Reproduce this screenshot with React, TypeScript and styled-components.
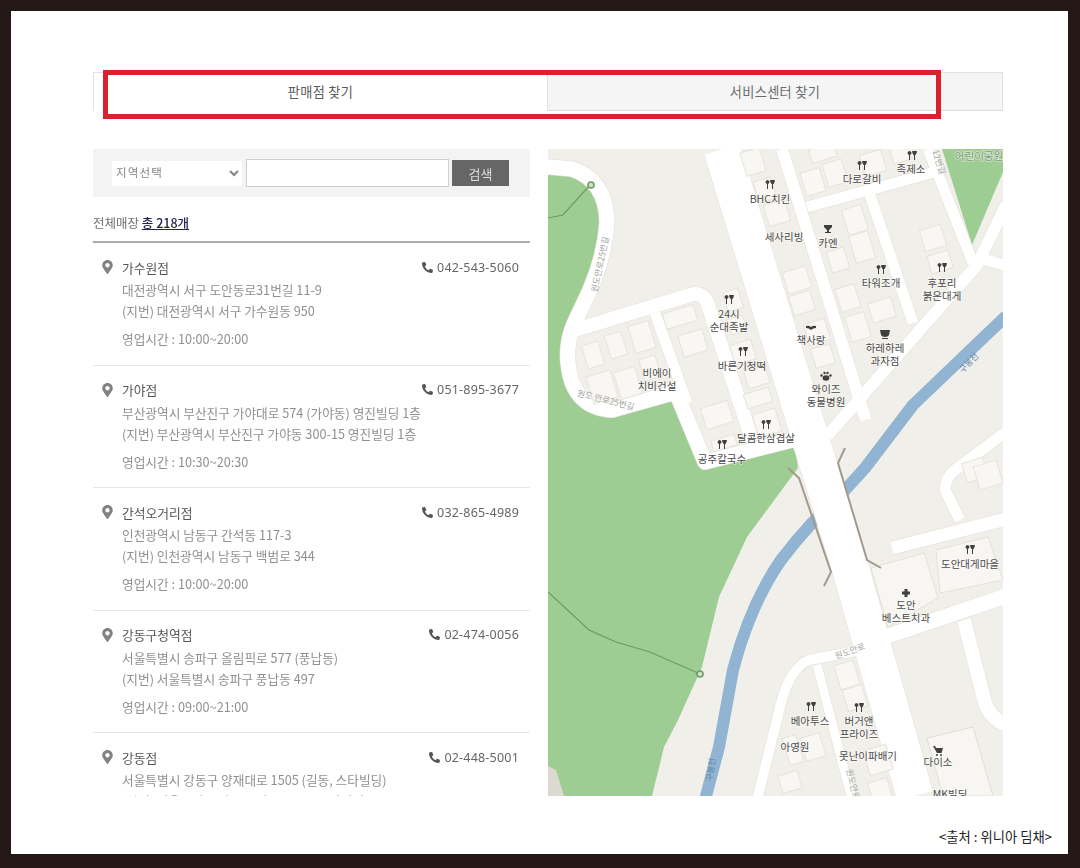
import React from "react";
import styled, { createGlobalStyle } from "styled-components";
import { FaMapMarkerAlt, FaPhoneAlt } from "react-icons/fa";

const KR = `"Noto Sans CJK KR", "Noto Sans", sans-serif`;

const GlobalStyle = createGlobalStyle`
  html, body {
    margin: 0;
    padding: 0;
    background: #231815;
    font-family: ${KR};
  }
`;

const Frame = styled.div`
  box-sizing: border-box;
  width: 1080px;
  height: 868px;
  padding: 11px 12px 14px 11px;
  background: #231815;
`;

const Page = styled.div`
  position: relative;
  height: 843px;
  padding: 61px 16px 0 82px;
  box-sizing: border-box;
  background: #fff;
`;

const Blurred = styled.div`
  width: 910px;
  filter: blur(0.45px);
`;

const Tabs = styled.div`
  display: flex;
  height: 39px;
  margin-bottom: 38px;
`;

const Tab = styled.div<{ $active?: boolean }>`
  box-sizing: border-box;
  display: flex;
  align-items: center;
  justify-content: center;
  width: ${(p) => (p.$active ? "454px" : "456px")};
  font-size: 13.2px;
  letter-spacing: 0.3px;
  color: ${(p) => (p.$active ? "#5c5c5c" : "#6c6c6c")};
  background: ${(p) => (p.$active ? "#fff" : "#f5f5f5")};
  border: 1px solid #e2e2e2;
  border-right: ${(p) => (p.$active ? "none" : "1px solid #e2e2e2")};
  border-bottom-color: ${(p) => (p.$active ? "#fff" : "#dcdcdc")};
`;

const Highlight = styled.div`
  position: absolute;
  left: 92px;
  top: 59px;
  box-sizing: border-box;
  width: 838px;
  height: 49px;
  border: 5px solid #d8232f;
`;

const Content = styled.div`
  display: flex;
  gap: 18px;
  height: 647px;
`;

const Side = styled.div`
  display: flex;
  flex-direction: column;
  width: 437px;
  overflow: hidden;
`;

const SearchBar = styled.div`
  display: flex;
  align-items: center;
  box-sizing: border-box;
  flex: none;
  height: 48px;
  padding-left: 19px;
  background: #f3f3f3;
`;

const RegionSelect = styled.select`
  box-sizing: border-box;
  width: 130px;
  height: 25px;
  margin-right: 4px;
  padding: 0 0 2px;
  border: none;
  background: #fff;
  color: #858585;
  font-family: ${KR};
  font-size: 11.5px;
  letter-spacing: 1.2px;
`;

const KeywordInput = styled.input`
  box-sizing: border-box;
  width: 203px;
  height: 28px;
  margin-right: 3px;
  border: 1px solid #cfcfcf;
  background: #fff;
`;

const SearchButton = styled.button`
  width: 57px;
  height: 26px;
  padding: 0;
  border: none;
  background: #666;
  color: #ddd;
  font-family: ${KR};
  font-size: 13px;
`;

const Total = styled.div`
  flex: none;
  height: 46px;
  box-sizing: border-box;
  padding-top: 16px;
  font-size: 12.5px;
  line-height: 20px;
  color: #707070;
  border-bottom: 2px solid #ababab;
`;

const TotalCount = styled.a`
  color: #23234f;
  font-weight: 500;
  text-decoration: underline;
`;

const Store = styled.div`
  flex: none;
  box-sizing: border-box;
  height: 122.6px;
  padding: 14px 11px 0 9px;
  border-bottom: 1px solid #e6e6e6;
`;

const StoreHead = styled.div`
  display: flex;
  align-items: center;
  height: 20px;
  margin-bottom: 2px;
`;

const Pin = styled(FaMapMarkerAlt)`
  width: 11px;
  height: 14px;
  margin-right: 9px;
  color: #828282;
`;

const StoreName = styled.div`
  flex: 1;
  font-size: 12.8px;
  color: #555;
`;

const Phone = styled.div`
  display: flex;
  align-items: center;
  gap: 4px;
  font-family: "Noto Sans", sans-serif;
  font-size: 12.5px;
  letter-spacing: 0.2px;
  color: #666;
`;

const PhoneIcon = styled(FaPhoneAlt)`
  width: 11px;
  height: 11px;
  color: #555;
`;

const Line = styled.div<{ $gap?: boolean }>`
  margin-top: ${(p) => (p.$gap ? "7px" : "0")};
  padding-left: 20px;
  font-size: 12.7px;
  line-height: 21px;
  color: #909090;
  white-space: nowrap;
`;

const MapBox = styled.div`
  flex: none;
  width: 455px;
  height: 647px;
  overflow: hidden;
`;

const MapSvg = styled.svg`
  display: block;
  width: 455px;
  height: 647px;
`;

const Label = styled.text<{ $tone?: string }>`
  font-family: ${KR};
  font-size: 10.5px;
  text-anchor: middle;
  fill: ${(p) => p.$tone || "#4a4a4a"};
  paint-order: stroke;
  stroke: rgba(255, 255, 255, 0.55);
  stroke-width: 1.5px;
`;

const RoadLabel = styled.text<{ $tone?: string }>`
  font-family: ${KR};
  font-size: 8.5px;
  text-anchor: middle;
  fill: ${(p) => p.$tone || "#a3a3a0"};
`;

const Caption = styled.div`
  margin-top: 32px;
  font-size: 13.3px;
  line-height: 18px;
  text-align: right;
  color: #222;
`;

const stores = [
  {
    name: "가수원점",
    phone: "042-543-5060",
    road: "대전광역시 서구 도안동로31번길 11-9",
    lot: "(지번) 대전광역시 서구 가수원동 950",
    hours: "영업시간 : 10:00~20:00",
  },
  {
    name: "가야점",
    phone: "051-895-3677",
    road: "부산광역시 부산진구 가야대로 574 (가야동) 영진빌딩 1층",
    lot: "(지번) 부산광역시 부산진구 가야동 300-15 영진빌딩 1층",
    hours: "영업시간 : 10:30~20:30",
  },
  {
    name: "간석오거리점",
    phone: "032-865-4989",
    road: "인천광역시 남동구 간석동 117-3",
    lot: "(지번) 인천광역시 남동구 백범로 344",
    hours: "영업시간 : 10:00~20:00",
  },
  {
    name: "강동구청역점",
    phone: "02-474-0056",
    road: "서울특별시 송파구 올림픽로 577 (풍납동)",
    lot: "(지번) 서울특별시 송파구 풍납동 497",
    hours: "영업시간 : 09:00~21:00",
  },
  {
    name: "강동점",
    phone: "02-448-5001",
    road: "서울특별시 강동구 양재대로 1505 (길동, 스타빌딩)",
    lot: "(지번) 서울특별시 강동구 길동 358-1 스타빌딩",
  },
];

// d, width
const roads: [string, number][] = [
  ["M722,149 L820,470 L850,567 L915,796", 37],
  ["M782,149 L858,395 L866,420", 12],
  ["M540,166 L572,169 Q606,180 607,222 Q605,255 590,290 L575,322 Q562,350 572,382 Q582,408 612,410 L676,392 L705,462 L800,438", 15],
  ["M575,330 L690,295 Q704,291 708,305 L752,440", 14],
  ["M655,313 L687,403", 11],
  ["M807,207 L942,170", 11],
  ["M928,149 L973,263", 11],
  ["M870,195 L913,323", 11],
  ["M827,436 L977,265 L1006,205", 12],
  ["M980,258 L1006,266", 11],
  ["M892,548 L1006,519", 13],
  ["M960,520 L945,490 Q945,478 955,470 L1006,432", 11],
  ["M870,642 L1006,596", 15],
  ["M964,620 L985,703 Q990,718 1006,725", 14],
  ["M878,647 L809,660 Q790,668 781,703 L757,800", 10],
  ["M817,665 L852,800", 9],
];

// cx, cy, w, h
const buildings: [number, number, number, number][] = [
  [753, 162, 20, 24], [765, 190, 18, 22], [777, 213, 22, 22], [797, 280, 24, 22], [802, 303, 22, 20],
  [817, 332, 22, 22], [823, 356, 20, 20], [813, 182, 20, 24], [835, 173, 20, 24], [873, 163, 22, 22],
  [823, 153, 26, 14], [855, 220, 20, 26], [862, 247, 20, 28], [838, 260, 18, 22], [848, 298, 20, 24],
  [882, 310, 24, 20], [858, 327, 20, 26], [933, 238, 22, 22], [940, 262, 22, 18], [900, 152, 18, 20],
  [593, 355, 17, 24], [616, 345, 17, 24], [642, 337, 21, 28], [602, 387, 25, 28], [628, 383, 22, 28], [650, 368, 17, 22],
  [680, 317, 32, 16], [693, 343, 25, 22], [717, 415, 28, 22], [724, 443, 24, 11],
  [733, 300, 16, 20], [737, 325, 16, 16], [743, 352, 22, 20], [757, 377, 22, 18], [758, 398, 26, 15], [767, 423, 24, 24],
  [847, 675, 20, 25], [855, 698, 20, 22], [813, 747, 20, 24], [793, 750, 14, 28], [790, 782, 20, 18],
  [878, 760, 24, 26], [880, 790, 20, 20], [975, 470, 22, 20], [988, 475, 24, 24],
];

const forks: [number, number][] = [
  [862, 166], [912, 156], [770, 185], [881, 270], [942, 268], [729, 300], [743, 352], [766, 425], [722, 445],
  [970, 550], [811, 707], [859, 708],
];

// x, y, lines
const labels: [number, number, string[]][] = [
  [862, 183, ["다로갈비"]],
  [911, 173, ["족제소"]],
  [770, 203, ["BHC치킨"]],
  [784, 241, ["세사리빙"]],
  [828, 247, ["카엔"]],
  [881, 287, ["타워조개"]],
  [942, 287, ["후포리", "붉은대게"]],
  [729, 318, ["24시", "순대족발"]],
  [811, 344, ["책사랑"]],
  [885, 352, ["하레하레", "과자점"]],
  [742, 370, ["바른기정떡"]],
  [657, 377, ["비에이", "치비건설"]],
  [826, 393, ["와이즈", "동물병원"]],
  [766, 442, ["달콤한삼겹살"]],
  [722, 463, ["공주칼국수"]],
  [970, 568, ["도안대게마을"]],
  [906, 609, ["도안", "베스트치과"]],
  [810, 725, ["베아투스"]],
  [859, 725, ["버거앤", "프라이즈"]],
  [795, 751, ["아영원"]],
  [868, 760, ["못난이파배기"]],
  [938, 766, ["다이소"]],
  [950, 798, ["MK빌딩"]],
];

function Fork({ x, y }: { x: number; y: number }) {
  return (
    <g stroke="#3f3f3f" strokeWidth="1" fill="#3f3f3f">
      <circle cx={x - 2.5} cy={y - 3} r="1.5" />
      <line x1={x - 2.5} y1={y - 3} x2={x - 2.5} y2={y + 4} />
      <path d="M0.5 -4.5 h4 l-1 3 h-2z" transform={`translate(${x} ${y})`} />
      <line x1={x + 2.5} y1={y - 3} x2={x + 2.5} y2={y + 4} />
    </g>
  );
}

function StoreMap() {
  return (
    <MapSvg viewBox="548 149 455 647">
      <rect x="548" y="149" width="455" height="647" fill="#f1efe9" />
      <path
        d="M540,172 L572,174 Q602,184 603,222 Q601,255 586,290 L571,322 Q558,350 568,382 Q580,412 612,414 L672,398 L702,468 L795,445 L798,468 L747,537 L719,597 L702,667 L678,720 L664,747 L652,796 L540,796Z"
        fill="#9ecd94"
      />
      <path d="M548,766 L556,770 L564,796 L548,796Z" fill="#dcd9d1" />
      <path d="M942,149 L1003,149 L1003,172 L972,245Z" fill="#9ecd94" />
      <path
        d="M1006,316 L913,405 L865,468 L845,490 Q810,522 781,560 Q750,605 733,670 L719,747 L705,800"
        fill="none"
        stroke="#90b4d2"
        strokeWidth="12"
        strokeLinejoin="round"
      />
      {roads.map(([d, w], i) => (
        <path key={"case" + i} d={d} fill="none" stroke="#e4e1d9" strokeWidth={w + 1.2} strokeLinejoin="round" />
      ))}
      {roads.map(([d, w], i) => (
        <path key={"road" + i} d={d} fill="none" stroke="#fff" strokeWidth={w} strokeLinejoin="round" />
      ))}
      <path d="M871,568 L924,553 L938,598 L888,627Z" fill="#f7f6f2" stroke="#e4e1d9" />
      <path d="M936,550 L988,537 L1003,580 L940,593Z" fill="#f7f6f2" stroke="#e4e1d9" />
      <path d="M927,738 L973,727 L993,796 L943,796Z" fill="#f7f6f2" stroke="#e0ddd5" />
      {buildings.map(([cx, cy, w, h], i) => (
        <rect
          key={i}
          x={cx - w / 2}
          y={cy - h / 2}
          width={w}
          height={h}
          fill="#f8f7f3"
          stroke="#e6e3dc"
          transform={`rotate(-17 ${cx} ${cy})`}
        />
      ))}
      <g fill="none" stroke="#a39a8f" strokeWidth="2">
        <path d="M788,468 L799,478 L831,572 L824,586" />
        <path d="M845,448 L838,463 L867,560 L881,568" />
      </g>
      <g fill="none" stroke="#6f9a63" strokeWidth="1.2">
        <path d="M548,218 L563,215 L590,185" />
        <path d="M548,592 L589,630 L616,642 L650,652 L698,673" />
        <circle cx="591" cy="185" r="3" fill="#cfe3c8" strokeWidth="1.6" />
        <circle cx="700" cy="674" r="3" fill="#cfe3c8" strokeWidth="1.6" />
      </g>
      {forks.map(([x, y], i) => (
        <Fork key={i} x={x} y={y} />
      ))}
      <path d="M824,225 h8 v2 l-3,3 v2 h2 v1 h-6 v-1 h2 v-2 l-3,-3z" fill="#3f3f3f" />
      <path d="M880,330 h10 l-1,5 q-1,2 -4,2 q-3,0 -4,-2z M882,338 h6 v1 h-6z" fill="#3f3f3f" />
      <path d="M806,326 q3,-1 5,1 q2,-2 5,-1 v2 q-3,0 -5,2 q-2,-2 -5,-2z" fill="#3f3f3f" />
      <g fill="#3f3f3f">
        <ellipse cx="826" cy="378" rx="3.4" ry="2.8" />
        <circle cx="821.5" cy="375.5" r="1.2" />
        <circle cx="824.5" cy="373" r="1.2" />
        <circle cx="827.5" cy="373" r="1.2" />
        <circle cx="830.5" cy="375.5" r="1.2" />
      </g>
      <path d="M904.5,589 h3 v2.5 h2.5 v3 h-2.5 v2.5 h-3 v-2.5 h-2.5 v-3 h2.5z" fill="#3f3f3f" />
      <g fill="#3f3f3f">
        <path d="M933,746 h2 l1,2 h7 l-1.5,5 h-4.5z" />
        <circle cx="937" cy="755" r="1" />
        <circle cx="941" cy="755" r="1" />
      </g>
      {labels.map(([x, y, lines]) => (
        <Label key={lines[0]} x={x} y={y}>
          {lines.map((text, i) => (
            <tspan key={text} x={x} dy={i ? 13 : 0}>
              {text}
            </tspan>
          ))}
        </Label>
      ))}
      <Label x="979" y="160" $tone="#7f9a7a">
        어린이공원
      </Label>
      <RoadLabel x="0" y="0" transform="translate(603 265) rotate(-78)">
        원도안로25번길
      </RoadLabel>
      <RoadLabel x="0" y="0" transform="translate(605 403) rotate(14)">
        원도 안로25번길
      </RoadLabel>
      <RoadLabel x="0" y="0" transform="translate(936 163) rotate(72)">
        12번길
      </RoadLabel>
      <RoadLabel x="0" y="0" transform="translate(971 365) rotate(-47)" $tone="#5f86a8">
        구봉천
      </RoadLabel>
      <RoadLabel x="0" y="0" transform="translate(714 770) rotate(-82)" $tone="#5f86a8">
        구봉천
      </RoadLabel>
      <RoadLabel x="0" y="0" transform="translate(851 654) rotate(-20)">
        원도안로
      </RoadLabel>
      <RoadLabel x="0" y="0" transform="translate(850 785) rotate(76)">
        원도안로
      </RoadLabel>
    </MapSvg>
  );
}

export default function App() {
  return (
    <Frame>
      <GlobalStyle />
      <Page>
        <Blurred>
          <Tabs>
            <Tab $active>판매점 찾기</Tab>
            <Tab>서비스센터 찾기</Tab>
          </Tabs>
          <Content>
            <Side>
              <SearchBar>
                <RegionSelect defaultValue="">
                  <option value="">지역선택</option>
                </RegionSelect>
                <KeywordInput />
                <SearchButton>검색</SearchButton>
              </SearchBar>
              <Total>
                전체매장 <TotalCount>총 218개</TotalCount>
              </Total>
              {stores.map((store) => (
                <Store key={store.name}>
                  <StoreHead>
                    <Pin />
                    <StoreName>{store.name}</StoreName>
                    <Phone>
                      <PhoneIcon />
                      {store.phone}
                    </Phone>
                  </StoreHead>
                  <Line>{store.road}</Line>
                  <Line>{store.lot}</Line>
                  {store.hours && <Line $gap>{store.hours}</Line>}
                </Store>
              ))}
            </Side>
            <MapBox>
              <StoreMap />
            </MapBox>
          </Content>
        </Blurred>
        <Highlight />
        <Caption>&lt;출처 : 위니아 딤채&gt;</Caption>
      </Page>
    </Frame>
  );
}
